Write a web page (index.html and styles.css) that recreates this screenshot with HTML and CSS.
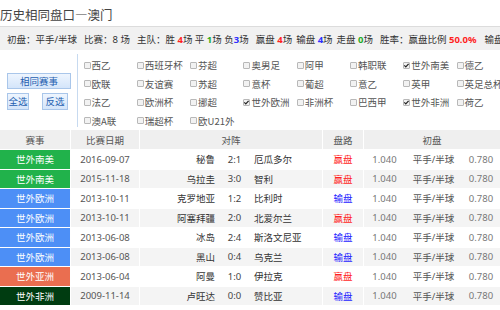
FILE: index.html
```html
<!DOCTYPE html>
<html lang="zh-CN">
<head>
<meta charset="utf-8">
<title>历史相同盘口—澳门</title>
<link rel="stylesheet" href="styles.css">
</head>
<body>
<div class="title">历史相同盘口—澳门</div>
<div class="stats">
  <span>初盘：平手/半球</span>
  <span>比赛：8 场</span>
  <span class="w10">主队：胜 <b class="r">4</b>场 平 <b class="g">1</b>场 负<b class="b">3</b>场</span>
  <span class="w4">赢盘 <b class="r">4</b>场</span>
  <span class="w4">输盘 <b class="b">4</b>场</span>
  <span>走盘 <b class="g">0</b>场</span>
  <span class="w8">胜率：赢盘比例 <b class="r">50.0%</b></span>
  <span>输盘比例 <b class="b">50.0%</b></span>
</div>
<div class="filter">
  <div class="left">
    <div class="btn main">相同赛事</div>
    <div class="btn-row">
      <div class="btn small">全选</div>
      <div class="btn small wide">反选</div>
    </div>
  </div>
  <div class="grid">
    <label class="item"><span class="cb"></span>西乙</label>
    <label class="item"><span class="cb"></span>西班牙杯</label>
    <label class="item"><span class="cb"></span>芬超</label>
    <label class="item"><span class="cb"></span>奥男足</label>
    <label class="item"><span class="cb"></span>阿甲</label>
    <label class="item"><span class="cb"></span>韩职联</label>
    <label class="item"><span class="cb on"><svg viewBox="0 0 7 7"><path d="M1.3 3.4 L2.8 4.9 L5.6 1.8"/></svg></span>世外南美</label>
    <label class="item"><span class="cb"></span>德乙</label>

    <label class="item"><span class="cb"></span>欧联</label>
    <label class="item"><span class="cb"></span>友谊赛</label>
    <label class="item"><span class="cb"></span>苏超</label>
    <label class="item"><span class="cb"></span>意杯</label>
    <label class="item"><span class="cb"></span>葡超</label>
    <label class="item"><span class="cb"></span>意乙</label>
    <label class="item"><span class="cb"></span>英甲</label>
    <label class="item"><span class="cb"></span>英足总杯</label>

    <label class="item"><span class="cb"></span>法乙</label>
    <label class="item"><span class="cb"></span>欧洲杯</label>
    <label class="item"><span class="cb"></span>挪超</label>
    <label class="item"><span class="cb on"><svg viewBox="0 0 7 7"><path d="M1.3 3.4 L2.8 4.9 L5.6 1.8"/></svg></span>世外欧洲</label>
    <label class="item"><span class="cb"></span>非洲杯</label>
    <label class="item"><span class="cb"></span>巴西甲</label>
    <label class="item"><span class="cb on"><svg viewBox="0 0 7 7"><path d="M1.3 3.4 L2.8 4.9 L5.6 1.8"/></svg></span>世外非洲</label>
    <label class="item"><span class="cb"></span>荷乙</label>

    <label class="item"><span class="cb"></span>澳A联</label>
    <label class="item"><span class="cb"></span>瑞超杯</label>
    <label class="item"><span class="cb"></span>欧U21外</label>
  </div>
</div>
<table class="matches">
  <colgroup>
    <col class="c-lg"><col class="c-date"><col class="c-vs"><col class="c-res"><col class="c-o1"><col class="c-hc"><col class="c-o2">
  </colgroup>
  <thead>
    <tr><th>赛事</th><th>比赛日期</th><th>对阵</th><th>盘路</th><th colspan="3">初盘</th></tr>
  </thead>
  <tbody>
    <tr>
      <td class="lg sa">世外南美</td><td class="date">2016-09-07</td>
      <td><div class="vs"><span class="home">秘鲁</span><span class="score">2:1</span><span class="away">厄瓜多尔</span></div></td>
      <td class="win">赢盘</td><td class="num nb">1.040</td><td class="hc nb">平手/半球</td><td class="num">0.780</td>
    </tr>
    <tr class="alt">
      <td class="lg sa">世外南美</td><td class="date">2015-11-18</td>
      <td><div class="vs"><span class="home">乌拉圭</span><span class="score">3:0</span><span class="away">智利</span></div></td>
      <td class="win">赢盘</td><td class="num nb">1.040</td><td class="hc nb">平手/半球</td><td class="num">0.780</td>
    </tr>
    <tr>
      <td class="lg eu">世外欧洲</td><td class="date">2013-10-11</td>
      <td><div class="vs"><span class="home">克罗地亚</span><span class="score">1:2</span><span class="away">比利时</span></div></td>
      <td class="lose">输盘</td><td class="num nb">1.040</td><td class="hc nb">平手/半球</td><td class="num">0.780</td>
    </tr>
    <tr class="alt">
      <td class="lg eu">世外欧洲</td><td class="date">2013-10-11</td>
      <td><div class="vs"><span class="home">阿塞拜疆</span><span class="score">2:0</span><span class="away">北爱尔兰</span></div></td>
      <td class="win">赢盘</td><td class="num nb">1.040</td><td class="hc nb">平手/半球</td><td class="num">0.780</td>
    </tr>
    <tr>
      <td class="lg eu">世外欧洲</td><td class="date">2013-06-08</td>
      <td><div class="vs"><span class="home">冰岛</span><span class="score">2:4</span><span class="away">斯洛文尼亚</span></div></td>
      <td class="lose">输盘</td><td class="num nb">1.040</td><td class="hc nb">平手/半球</td><td class="num">0.780</td>
    </tr>
    <tr class="alt">
      <td class="lg eu">世外欧洲</td><td class="date">2013-06-08</td>
      <td><div class="vs"><span class="home">黑山</span><span class="score">0:4</span><span class="away">乌克兰</span></div></td>
      <td class="lose">输盘</td><td class="num nb">1.040</td><td class="hc nb">平手/半球</td><td class="num">0.780</td>
    </tr>
    <tr>
      <td class="lg as">世外亚洲</td><td class="date">2013-06-04</td>
      <td><div class="vs"><span class="home">阿曼</span><span class="score">1:0</span><span class="away">伊拉克</span></div></td>
      <td class="win">赢盘</td><td class="num nb">1.040</td><td class="hc nb">平手/半球</td><td class="num">0.780</td>
    </tr>
    <tr class="alt">
      <td class="lg af">世外非洲</td><td class="date">2009-11-14</td>
      <td><div class="vs"><span class="home">卢旺达</span><span class="score">0:0</span><span class="away">赞比亚</span></div></td>
      <td class="lose">输盘</td><td class="num nb">1.040</td><td class="hc nb">平手/半球</td><td class="num">0.780</td>
    </tr>
  </tbody>
</table>
</body>
</html>
```

FILE: styles.css
```css
html, body {
  margin: 0;
  padding: 0;
  overflow: hidden;
  background: #fff;
}
body {
  width: 500px;
  font-family: "Noto Sans", "Noto Sans CJK SC", sans-serif;
  font-size: 9.5px;
  color: #333;
}

.title {
  height: 26px;
  box-sizing: border-box;
  padding-top: 5px;
  line-height: 20px;
  font-size: 12.5px;
  color: #444;
  font-family: "Noto Sans CJK SC", sans-serif;
}

.stats {
  height: 24px;
  box-sizing: border-box;
  border-top: 1px solid #dcdcdc;
  background: #f1f1f1;
  display: flex;
  align-items: center;
  gap: 7px;
  padding-left: 7px;
  white-space: nowrap;
  color: #333;
}
.stats b { font-weight: bold; }
.stats .w10 { margin-right: 0; }
.stats .w4 { margin-right: -3px; }
.stats .w8 { margin-right: 1px; }
.r { color: #ff1f1f; }
.g { color: #1faa1f; }
.b { color: #2f2fff; }

.filter {
  display: flex;
  height: 80px;
}
.left {
  width: 78px;
  flex: none;
  box-sizing: border-box;
  border-right: 1px solid #c7daf0;
  margin: 4px 0 3px;
  padding: 18.7px 0 0 7px;
}
.btn {
  box-sizing: border-box;
  border: 1px solid #a9c6ea;
  background: linear-gradient(#eef5fe, #d4e5fa);
  color: #1f5fb0;
  text-align: center;
  font-family: "Noto Sans CJK SC", sans-serif;
}
.btn.main {
  width: 64px;
  height: 16px;
  line-height: 14px;
}
.btn-row {
  display: flex;
  gap: 13px;
  margin-top: 4px;
}
.btn.small {
  width: 22px;
  height: 17px;
  line-height: 15px;
}
.btn.small.wide { width: 26px; }

.grid {
  display: grid;
  grid-template-columns: repeat(8, 53.3px);
  grid-auto-rows: 18.5px;
  padding: 6px 0 0 5.5px;
}
.item {
  display: flex;
  align-items: center;
  gap: 1px;
  color: #555;
  white-space: nowrap;
  font-family: "Noto Sans CJK SC", sans-serif;
}
.cb {
  flex: none;
  width: 7px;
  height: 7px;
  box-sizing: border-box;
  border: 1px solid #b8b8b8;
  border-radius: 1px;
  background: #f2f2f2;
  display: inline-flex;
}
.cb svg {
  width: 7px;
  height: 7px;
  margin: -1px;
}
.cb svg path {
  fill: none;
  stroke: #222;
  stroke-width: 1.2;
}

.matches {
  border-collapse: separate;
  border-spacing: 0;
  table-layout: fixed;
  width: 501px;
}
.c-lg { width: 71px; }
.c-date { width: 69px; }
.c-vs { width: 183px; }
.c-res { width: 41px; }
.c-o1 { width: 41px; }
.c-hc { width: 57px; }
.c-o2 { width: 39px; }

.matches th,
.matches td {
  padding: 0;
  border-right: 1px solid #fff;
  border-bottom: 1px solid #fff;
  text-align: center;
  white-space: nowrap;
  overflow: hidden;
}
.matches th {
  height: 19px;
  background: #efefef;
  color: #555;
  font-weight: normal;
  font-family: "Noto Sans CJK SC", sans-serif;
}
.matches td {
  height: 18.5px;
  color: #333;
}
.matches tr.alt td { background: #f4f4f4; }
.matches td.nb { border-right: 0; }

.matches tr td.lg { color: #fff; font-family: "Noto Sans CJK SC", sans-serif; }
.matches tr td.sa { background: #21b24b; }
.matches tr td.eu { background: #4d8ff6; }
.matches tr td.as { background: #ea6e50; }
.matches tr td.af { background: #003c11; }

.matches td.date { color: #555; }
.matches td.num { color: #777; }
.matches td.hc { color: #555; }
.matches td.win { color: #ff1f1f; }
.matches td.lose { color: #2424ff; }

.vs {
  display: flex;
  align-items: center;
}
.home {
  width: 75px;
  flex: none;
  text-align: right;
}
.score {
  width: 39px;
  flex: none;
  text-align: center;
  color: #444;
}
.away {
  text-align: left;
}
```
